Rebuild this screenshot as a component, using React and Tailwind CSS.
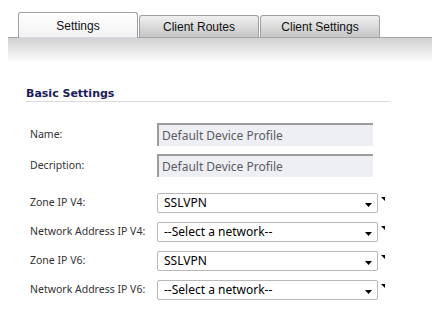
const Tick = () => (
  <svg width="4" height="4" viewBox="0 0 4 4" className="absolute -right-[8px] top-[3px]">
    <path d="M0 0H4V4Z" fill="#000" />
  </svg>
);

const Arrow = () => (
  <svg width="7" height="4" viewBox="0 0 7 4" className="mt-[3px]">
    <path d="M0 0H7L3.5 4Z" fill="#000" />
  </svg>
);

const Tab = ({ label, active }) =>
  active ? (
    <div className="relative z-10 -mb-px flex h-[26px] w-[120px] items-center justify-center rounded-t-[3px] border border-b-0 border-[#a0a0a0] bg-gradient-to-b from-white to-[#f2f2f2] text-[12px] text-[#111] shadow-[inset_0_-1px_0_#d4dae6]">
      {label}
    </div>
  ) : (
    <div className="flex h-[22px] w-[120px] items-center justify-center rounded-t-[3px] border border-b-0 border-[#a0a0a0] bg-gradient-to-b from-[#f0f0f0] to-[#c6c6c6] text-[12px] text-[#111]">
      {label}
    </div>
  );

const TextRow = ({ label, value }) => (
  <div className="flex h-[23px] items-center">
    <span className="w-[131px] shrink-0 pl-[4px] text-[10.5px] text-[#333]">{label}</span>
    <div className="flex h-[23px] w-[216px] shrink-0 items-center border-l-2 border-t-2 border-[#9c9c9c] bg-[#eeeff2] pl-[3px] text-[12px] text-[#5c5c66]">
      {value}
    </div>
  </div>
);

const SelectRow = ({ label, value }) => (
  <div className="flex h-[20px] items-center">
    <span className="w-[131px] shrink-0 pl-[4px] text-[10.5px] text-[#333]">{label}</span>
    <div className="relative flex h-[20px] w-[221px] shrink-0 items-center justify-between rounded-[2px] border border-[#b8b8b8] bg-white pl-[6px] pr-[5px] text-[12px] text-black">
      <span>{value}</span>
      <Arrow />
      <Tick />
    </div>
  </div>
);

export default function App() {
  return (
    <div className="relative h-[321px] w-[432px] overflow-hidden bg-white" style={{ fontFamily: '"Noto Sans", "DejaVu Sans", sans-serif' }}>
      <div className="pl-[8px] pt-[12px]">
        <div className="flex h-[25px] items-end gap-[1px] pl-[10px]" style={{ fontFamily: '"Liberation Sans", Arial, sans-serif' }}>
          <Tab label="Settings" active />
          <Tab label="Client Routes" />
          <Tab label="Client Settings" />
        </div>
        <div className="h-[26px] border-t border-[#a4a4ac] bg-gradient-to-b from-[#d2d2d2] to-white" />
      </div>

      <div className="ml-[26px] mr-[42px] mt-[24px]">
        <div className="h-[15px] border-b border-[#dcdcdc] text-[11px] font-bold leading-[13px] text-[#1a1a5a]" style={{ fontFamily: '"DejaVu Sans", sans-serif' }}>
          Basic Settings
        </div>
        <div className="mt-[21px] flex flex-col gap-[8px]">
          <TextRow label="Name:" value="Default Device Profile" />
          <TextRow label="Decription:" value="Default Device Profile" />
        </div>
        <div className="mt-[16px] flex flex-col gap-[9px]">
          <SelectRow label="Zone IP V4:" value="SSLVPN" />
          <SelectRow label="Network Address IP V4:" value="--Select a network--" />
          <SelectRow label="Zone IP V6:" value="SSLVPN" />
          <SelectRow label="Network Address IP V6:" value="--Select a network--" />
        </div>
      </div>
    </div>
  );
}
